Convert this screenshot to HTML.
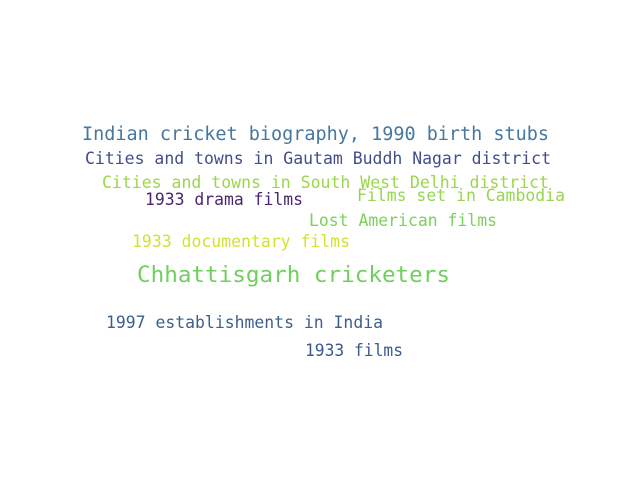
<!DOCTYPE html>
<html><head><meta charset="utf-8"><style>
html,body{margin:0;padding:0;background:#fff;}
svg{display:block}
text{font-family:"DejaVu Sans Mono","Liberation Mono",monospace;}
</style></head><body>
<svg width="640" height="480" viewBox="0 0 640 480" xmlns="http://www.w3.org/2000/svg">
<rect width="640" height="480" fill="#fff"/>
<text x="82" y="140" font-size="18.5" fill="#45779f" textLength="467" lengthAdjust="spacingAndGlyphs">Indian cricket biography, 1990 birth stubs</text>
<text x="85" y="164" font-size="16.5" fill="#414e8a" textLength="466" lengthAdjust="spacingAndGlyphs">Cities and towns in Gautam Buddh Nagar district</text>
<text x="102" y="188" font-size="16.5" fill="#9bd74a" textLength="447" lengthAdjust="spacingAndGlyphs">Cities and towns in South West Delhi district</text>
<text x="145" y="205" font-size="16.5" fill="#4b2670" textLength="158" lengthAdjust="spacingAndGlyphs">1933 drama films</text>
<text x="357" y="201" font-size="16.5" fill="#98d550" textLength="208" lengthAdjust="spacingAndGlyphs">Films set in Cambodia</text>
<text x="309" y="226" font-size="16.5" fill="#7bd15a" textLength="188" lengthAdjust="spacingAndGlyphs">Lost American films</text>
<text x="132" y="247" font-size="16.5" fill="#d2e232" textLength="218" lengthAdjust="spacingAndGlyphs">1933 documentary films</text>
<text x="137" y="282" font-size="22.6" fill="#70cf5e" textLength="313" lengthAdjust="spacingAndGlyphs">Chhattisgarh cricketers</text>
<text x="106" y="328" font-size="16.5" fill="#3e5f8c" textLength="277" lengthAdjust="spacingAndGlyphs">1997 establishments in India</text>
<text x="305" y="356" font-size="16.5" fill="#3b5b8c" textLength="98" lengthAdjust="spacingAndGlyphs">1933 films</text>
</svg>
</body></html>
